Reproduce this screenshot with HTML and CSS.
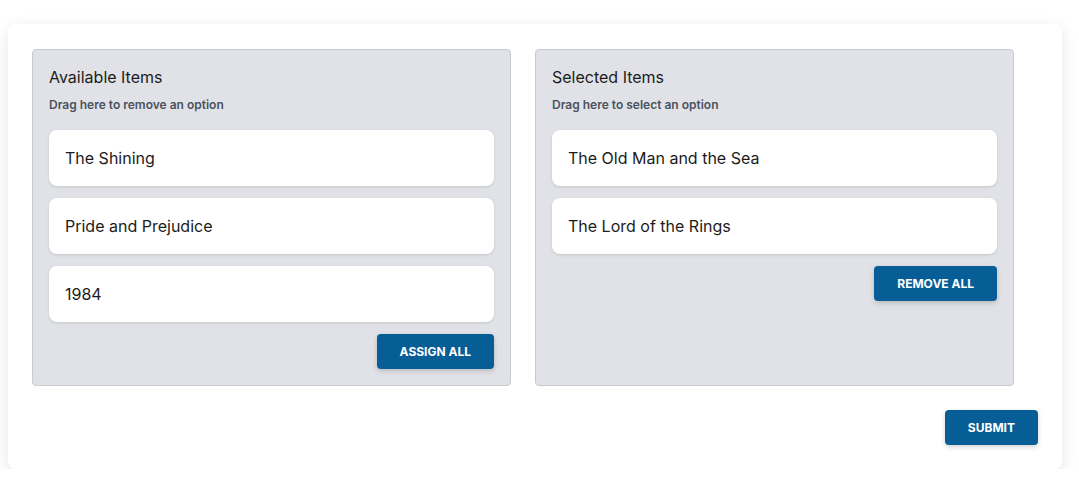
FILE: index.html
```html
<!DOCTYPE html>
<html>
<head>
<meta charset="utf-8">
<link rel="stylesheet" href="styles.css">
</head>
<body>
<div class="card">
  <div class="lists">
    <div class="panel">
      <div class="panel-title">Available Items</div>
      <div class="panel-hint">Drag here to remove an option</div>
      <div class="items">
        <div class="item">The Shining</div>
        <div class="item">Pride and Prejudice</div>
        <div class="item">1984</div>
      </div>
      <div class="actions"><button class="btn">Assign All</button></div>
    </div>
    <div class="panel">
      <div class="panel-title">Selected Items</div>
      <div class="panel-hint">Drag here to select an option</div>
      <div class="items">
        <div class="item">The Old Man and the Sea</div>
        <div class="item">The Lord of the Rings</div>
      </div>
      <div class="actions"><button class="btn">Remove All</button></div>
    </div>
  </div>
  <div class="footer"><button class="btn btn-submit">Submit</button></div>
</div>
</body>
</html>
```
FILE: styles.css
```css
* { box-sizing: border-box; }
html, body { background: #ffffff; }
body {
  margin: 0;
  padding: 24px 17px 0 8px;
  font-family: Inter, "Noto Sans", sans-serif;
  color: #1c1c1c;
}
.card {
  background: #fff;
  border-radius: 8px;
  box-shadow: 0 4px 16px rgba(0,0,0,0.10);
  padding: 25px 24px 24px 24px;
}
.lists {
  display: grid;
  grid-template-columns: 479px 479px;
  column-gap: 24px;
  align-items: start;
}
.panel {
  background: #e1e2e7;
  border: 1px solid #c9cacf;
  border-radius: 4px;
  padding: 16px 16px 16px 16px;
  height: 337px;
}
.panel-title {
  font-size: 16px;
  line-height: 22px;
  color: #1c1c1c;
}
.panel-hint {
  font-size: 12px;
  font-weight: 600;
  color: #4b5160;
  margin-top: 9px;
  line-height: 16px;
}
.items {
  display: flex;
  flex-direction: column;
  gap: 12px;
  margin-top: 17px;
}
.item {
  background: #fff;
  border-radius: 8px;
  height: 56px;
  display: flex;
  align-items: center;
  padding: 0 16px;
  font-size: 16px;
  color: #1c1c1c;
  box-shadow: 0 1px 3px rgba(0,0,0,0.12);
}
.actions {
  display: flex;
  justify-content: flex-end;
  margin-top: 12px;
}
.btn {
  font-family: Inter, "Noto Sans", sans-serif;
  background: #075d96;
  color: #fff;
  border: none;
  border-radius: 4px;
  height: 35px;
  padding: 0 23px;
  font-size: 12px;
  font-weight: 700;
  text-transform: uppercase;
  box-shadow: 0 2px 5px rgba(0,0,0,0.18);
}
.footer {
  display: flex;
  justify-content: flex-end;
  margin-top: 24px;
}
```
